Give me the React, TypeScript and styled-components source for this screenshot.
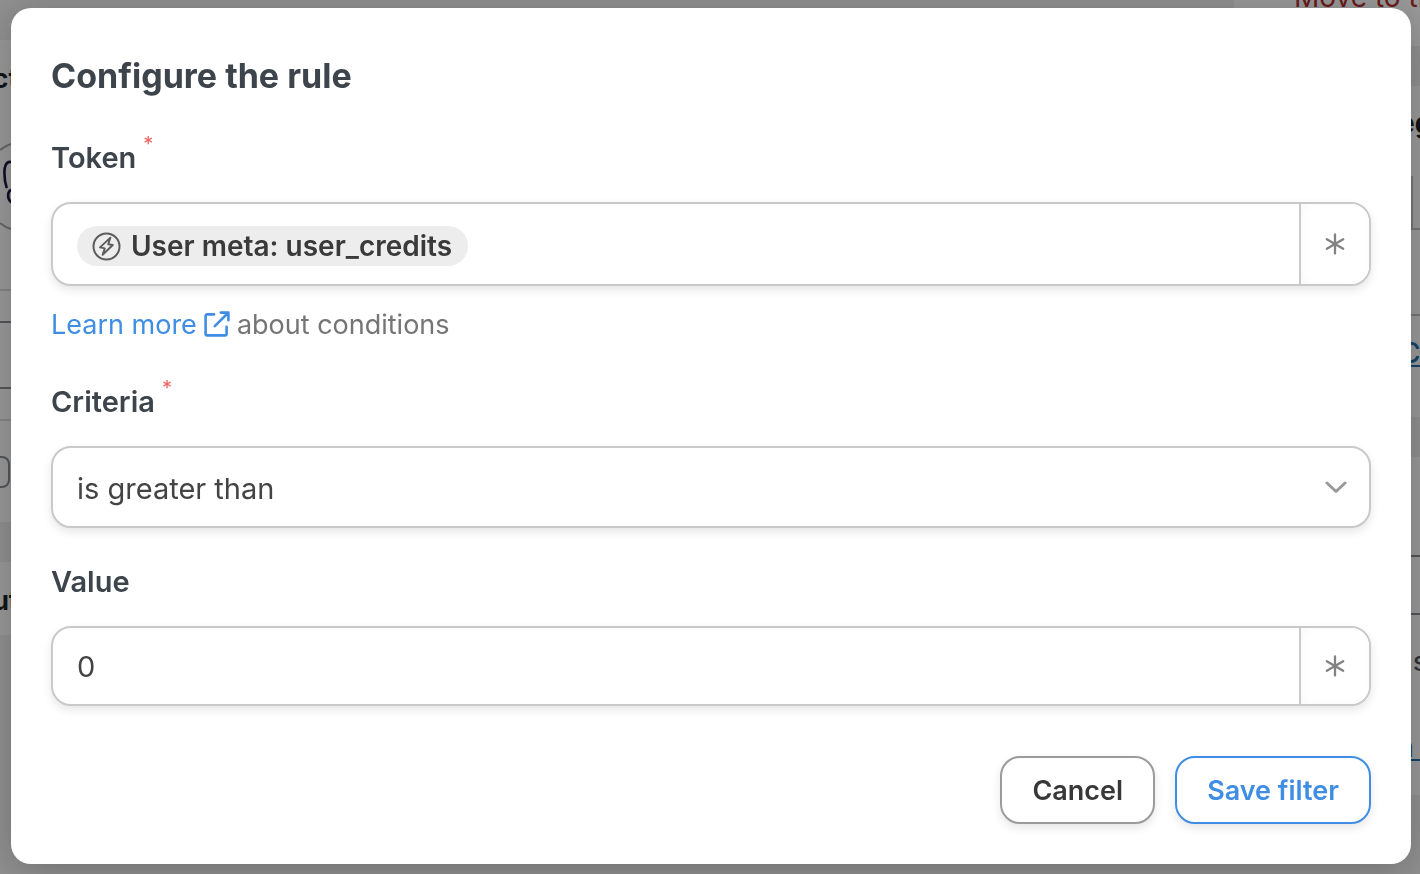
import React, { useState } from "react";
import styled, { createGlobalStyle } from "styled-components";

const GlobalStyle = createGlobalStyle`
  *, *::before, *::after { box-sizing: border-box; }
  html, body { margin: 0; padding: 0; }
  body {
    font-family: Inter, "Liberation Sans", sans-serif;
    background: #f0f0f1;
    color: #1d2327;
    overflow: hidden;
  }
`;

/* Editor page under the dialog */
const Page = styled.div`
  display: flex;
  justify-content: space-between;
  height: 100vh;
  overflow: hidden;
`;

const Canvas = styled.div`
  width: 11px;
  display: flex;
  flex-direction: column;
  padding-top: 40px;
  gap: 40px;
  overflow: hidden;
`;

const Sidebar = styled.div`
  width: 186px;
  display: flex;
  flex-direction: column;
  gap: 40px;
  overflow: hidden;
  white-space: nowrap;
`;

const Panel = styled.div<{ $h: number }>`
  flex: none;
  height: ${(p) => p.$h}px;
  background: #fff;
  overflow: hidden;
`;

const Row = styled.div<{ $h: number; $line?: string; $inset?: number; $end?: boolean }>`
  display: flex;
  align-items: ${(p) => (p.$end ? "flex-end" : "center")};
  height: ${(p) => p.$h}px;
  padding-left: ${(p) => p.$inset ?? 0}px;
  border-bottom: ${(p) => (p.$line ? `2px solid ${p.$line}` : "0")};
`;

const CanvasTitle = styled.div`
  display: flex;
  align-items: center;
  justify-content: center;
  height: 76px;
  font-size: 26px;
  font-weight: 700;
`;

const CanvasBox = styled.div`
  width: 10px;
  height: 32px;
  border: 2px solid #8c8f94;
  border-left: 0;
  border-radius: 0 8px 8px 0;
`;

const SideTitle = styled.div`
  font-size: 28px;
  font-weight: 700;
`;

const SideText = styled.div`
  font-size: 26px;
  font-weight: 500;
  color: #50575e;
`;

const SideBox = styled.div`
  width: 14px;
  height: 52px;
  border: 2px solid #c3c4c7;
  border-bottom: 0;
`;

const SideLink = styled.a`
  font-size: 28px;
  line-height: 24px;
  font-weight: 500;
  color: #2271b1;
  text-decoration: none;
  border-bottom: 2px solid #2271b1;
`;

const TrashLink = styled(SideLink)`
  padding-bottom: 6px;
  border-bottom: 0;
  font-weight: 400;
  color: #b32d2e;
`;

/* Dialog */
const Overlay = styled.div`
  position: fixed;
  inset: 0;
  padding: 8px 9px 10px 11px;
  background: rgba(0, 0, 0, 0.4);
`;

const Dialog = styled.form`
  display: flex;
  flex-direction: column;
  padding: 44px 40px 40px;
  background: #fff;
  border-radius: 20px;
  box-shadow: 0 6px 40px rgba(0, 0, 0, 0.24);
`;

const Title = styled.h1`
  margin: 0 0 38px;
  font-size: 34px;
  line-height: 48px;
  font-weight: 700;
  color: #3d444b;
`;

const Field = styled.div`
  display: flex;
  flex-direction: column;
`;

const FieldLabel = styled.label`
  display: flex;
  gap: 7px;
  height: 40px;
  margin-bottom: 24px;
  font-size: 29px;
  line-height: 40px;
  font-weight: 600;
  color: #3d444b;
`;

const Required = styled.span`
  font-size: 20px;
  line-height: 12px;
  font-weight: 400;
  color: #f0625f;
`;

const Control = styled.div<{ $h: number }>`
  display: flex;
  align-items: stretch;
  height: ${(p) => p.$h}px;
  border: 2px solid #c9c9c9;
  border-radius: 20px;
  background: #fff;
  box-shadow: 0 4px 10px rgba(0, 0, 0, 0.1);
  overflow: hidden;
`;

const TokenArea = styled.div`
  flex: 1;
  display: flex;
  align-items: center;
  padding: 4px 24px 0;
`;

const Chip = styled.span`
  display: flex;
  align-items: center;
  gap: 10px;
  height: 40px;
  padding: 0 16px 0 15px;
  border-radius: 20px;
  background: #ededed;
  color: #3a3a3a;
  font-size: 28px;
  font-weight: 600;
`;

const TextInput = styled.input`
  flex: 1;
  min-width: 0;
  padding: 0 24px;
  border: 0;
  outline: 0;
  background: transparent;
  font: inherit;
  font-size: 29px;
  color: #444;
`;

const SelectBox = styled.select`
  appearance: none;
  width: 100%;
  padding: 2px 64px 0 24px;
  border: 0;
  outline: 0;
  background: transparent;
  font: inherit;
  font-size: 29px;
  color: #444;
`;

const Chevron = styled.svg`
  position: absolute;
  right: 22px;
  top: 50%;
  transform: translateY(-50%);
  pointer-events: none;
`;

const SelectWrap = styled.div`
  position: relative;
  display: flex;
  flex: 1;
`;

const TokenButton = styled.button`
  display: flex;
  align-items: center;
  justify-content: center;
  width: 70px;
  padding: 0;
  border: 0;
  border-left: 2px solid #c9c9c9;
  background: #fff;
  box-shadow: inset 2px 0 8px rgba(0, 0, 0, 0.03);
`;

const Help = styled.p`
  display: flex;
  align-items: center;
  gap: 7px;
  margin: 19px 0 37px;
  font-size: 27px;
  line-height: 40px;
  color: #757575;
`;

const HelpLink = styled.a`
  display: flex;
  align-items: center;
  gap: 7px;
  color: #3f8ee3;
  text-decoration: none;

  svg {
    margin-bottom: 2px;
  }
`;

const Actions = styled.div`
  display: flex;
  justify-content: flex-end;
  gap: 20px;
  margin-top: 50px;
`;

const Button = styled.button<{ $primary?: boolean }>`
  height: 68px;
  padding: 0 30px;
  border: 2px solid ${(p) => (p.$primary ? "#3f8ee3" : "#9b9b9b")};
  border-radius: 20px;
  background: #fff;
  box-shadow: 0 4px 10px rgba(0, 0, 0, 0.1);
  color: ${(p) => (p.$primary ? "#3f8ee3" : "#383838")};
  font: inherit;
  font-size: 27px;
  font-weight: 600;
`;

const Gap = styled.div`
  height: 34px;
`;

const BoltIcon = () => (
  <svg width="29" height="29" viewBox="0 0 29 29" fill="none" stroke="#5c5c5c" strokeWidth="2" strokeLinejoin="round">
    <circle cx="14.5" cy="14.5" r="13" />
    <path d="M18.4 5.6 L8 15.4 L12.8 16.4 L10.6 22.8 L20.8 13 L16.2 12.2 Z" strokeWidth="1.9" />
  </svg>
);

const AsteriskIcon = () => (
  <svg width="22" height="22" viewBox="0 0 22 22" fill="none" stroke="#828282" strokeWidth="2.3" strokeLinecap="round">
    <path d="M11 1.5v19M2.8 6.3l16.4 9.4M19.2 6.3L2.800 15.700" />
  </svg>
);

const ExternalIcon = () => (
  <svg width="26" height="26" viewBox="0 0 26 26" fill="none" stroke="#3f8ee3" strokeWidth="2.6" strokeLinecap="round" strokeLinejoin="round">
    <path d="M10 3.400H3.200a1.600 1.600 0 0 0-1.600 1.600v17.800a1.600 1.600 0 0 0 1.600 1.600h17.800a1.600 1.600 0 0 0 1.600-1.600v-7" />
    <path d="M16.800 1.600h7.600v7.600M24 2L10.800 15.200" />
  </svg>
);

const UserGlyph = () => (
  <svg width="11" height="110" viewBox="0 0 11 110" fill="none">
    <path d="M0 15 Q5 11 11 9 M0 88 Q5 92 11 94" stroke="#a7aaad" strokeWidth="2" />
    <path d="M11 27c-5-1-7 5-6.500 12 0 6 .5 9 2 13M11 55c-3 1-4.500 8 0 12" stroke="#1b1642" strokeWidth="2.600" strokeLinecap="round" />
  </svg>
);

export default function App() {
  const [criteria, setCriteria] = useState("gt");
  const [value, setValue] = useState("0");

  return (
    <>
      <GlobalStyle />
      <Page aria-hidden="true">
        <Canvas>
          <Panel $h={482}>
            <CanvasTitle>ct</CanvasTitle>
            <Row $h={147}>
              <UserGlyph />
            </Row>
            <Row $h={28} $line="#dcdcde" />
            <Row $h={32} $line="#8c8f94" />
            <Row $h={66} $line="#8c8f94" />
            <Row $h={32} $line="#dcdcde" />
            <Row $h={101}>
              <CanvasBox />
            </Row>
          </Panel>
          <Panel $h={73}>
            <CanvasTitle>ut</CanvasTitle>
          </Panel>
        </Canvas>
        <Sidebar>
          <Panel $h={46}>
            <Row $h={0} $inset={60}>
              <TrashLink href="#trash">Move to trash</TrashLink>
            </Row>
          </Panel>
          <Panel $h={331}>
            <Row $h={74} $inset={164}>
              <SideTitle>eg</SideTitle>
            </Row>
            <Row $h={70} $line="#c3c4c7" $inset={165} $end>
              <SideBox />
            </Row>
            <Row $h={86} $line="#c3c4c7" />
            <Row $h={76} $inset={166}>
              <SideLink href="#categories">C</SideLink>
            </Row>
          </Panel>
          <Panel $h={338}>
            <Row $h={100} $line="#8c8f94" />
            <Row $h={58} $line="#8c8f94" />
            <Row $h={92} $inset={179}>
              <SideText>s</SideText>
            </Row>
            <Row $h={82} $inset={163}>
              <SideLink href="#image">n&nbsp;&nbsp;</SideLink>
            </Row>
          </Panel>
        </Sidebar>
      </Page>
      <Overlay>
        <Dialog role="dialog" aria-labelledby="dialog-title" onSubmit={(e) => e.preventDefault()}>
          <Title id="dialog-title">Configure the rule</Title>

          <Field>
            <FieldLabel as="div" id="token-label">
              Token<Required>*</Required>
            </FieldLabel>
            <Control $h={84} role="group" aria-labelledby="token-label">
              <TokenArea>
                <Chip>
                  <BoltIcon />
                  User meta: user_credits
                </Chip>
              </TokenArea>
              <TokenButton type="button" aria-label="Insert token">
                <AsteriskIcon />
              </TokenButton>
            </Control>
            <Help>
              <HelpLink href="#conditions">
                Learn more
                <ExternalIcon />
              </HelpLink>
              about conditions
            </Help>
          </Field>

          <Field>
            <FieldLabel htmlFor="criteria">
              Criteria<Required>*</Required>
            </FieldLabel>
            <Control $h={82}>
              <SelectWrap>
                <SelectBox id="criteria" value={criteria} onChange={(e) => setCriteria(e.target.value)}>
                  <option value="gt">is greater than</option>
                </SelectBox>
                <Chevron width="22" height="14" viewBox="0 0 22 14" fill="none" stroke="#999" strokeWidth="3" strokeLinecap="round" strokeLinejoin="round">
                  <path d="M2 3l9 8.500 9-8.500" />
                </Chevron>
              </SelectWrap>
            </Control>
          </Field>

          <Gap />

          <Field>
            <FieldLabel htmlFor="value">Value</FieldLabel>
            <Control $h={80}>
              <TextInput id="value" type="text" value={value} onChange={(e) => setValue(e.target.value)} />
              <TokenButton type="button" aria-label="Insert token in value">
                <AsteriskIcon />
              </TokenButton>
            </Control>
          </Field>

          <Actions>
            <Button type="button">Cancel</Button>
            <Button type="submit" $primary>Save filter</Button>
          </Actions>
        </Dialog>
      </Overlay>
    </>
  );
}
